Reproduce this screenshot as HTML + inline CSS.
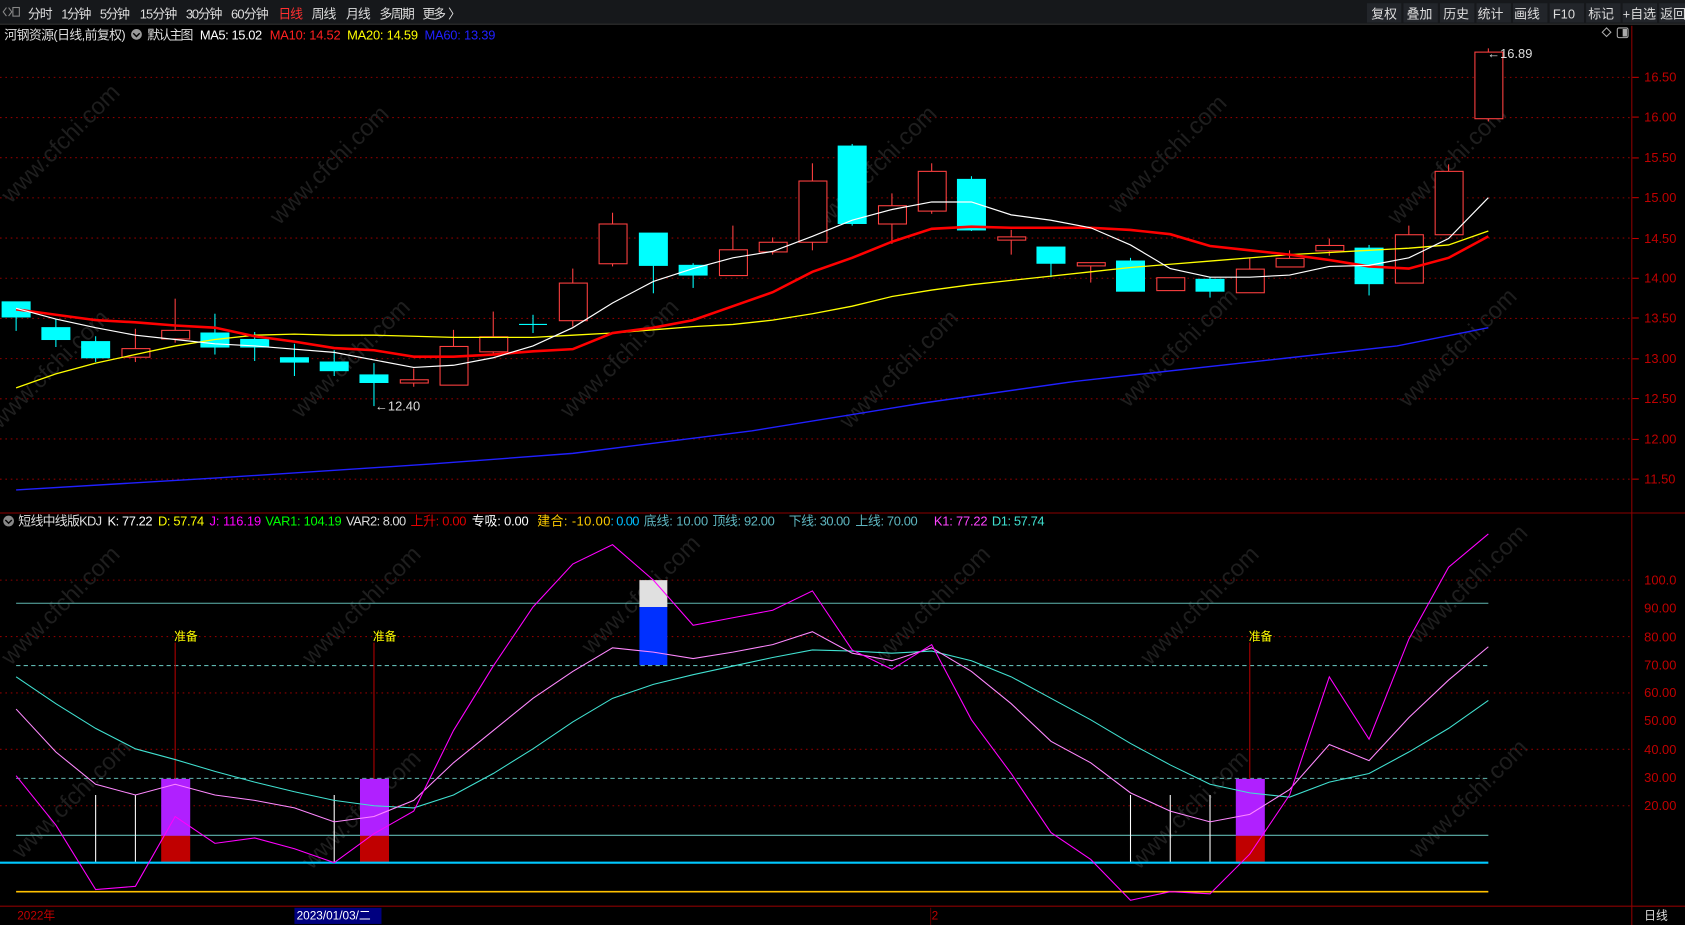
<!DOCTYPE html>
<html><head><meta charset="utf-8"><style>
html,body{margin:0;padding:0;background:#000;width:1685px;height:925px;overflow:hidden}
svg{display:block}
text{font-family:"Liberation Sans","Noto Sans CJK SC",sans-serif}
</style></head><body>
<svg width="1685" height="925" viewBox="0 0 1568 861" preserveAspectRatio="none" xmlns="http://www.w3.org/2000/svg">
<rect width="1568" height="861" fill="#000"/>
<!-- top bar -->
<rect x="0" y="0" width="1568" height="22" fill="#16181b"/>
<line x1="0" y1="22.5" x2="1568" y2="22.5" stroke="#333"/>
<g font-size="12" fill="#ddd" lengthAdjust="spacingAndGlyphs">
<path d="M6 7 L3 11 L6 15 M8 7 L11 11 L8 15" stroke="#888" fill="none"/><rect x="12" y="7" width="6" height="8" fill="none" stroke="#888"/>
<text x="26" y="17" textLength="23">分时</text><text x="57" y="17" textLength="28">1分钟</text><text x="93" y="17" textLength="28">5分钟</text><text x="130" y="17" textLength="35">15分钟</text><text x="173" y="17" textLength="34">30分钟</text><text x="215" y="17" textLength="35">60分钟</text>
<text x="259" y="17" fill="#ff3030" textLength="23">日线</text><text x="290" y="17" textLength="23">周线</text><text x="322" y="17" textLength="23">月线</text><text x="353" y="17" textLength="33">多周期</text><text x="393" y="17" textLength="22">更多</text><text x="417" y="17">〉</text>
</g>
<g font-size="12" fill="#ddd">
<rect x="1272" y="3" width="32" height="18" fill="#22252a"/><text x="1276" y="17">复权</text>
<rect x="1306" y="3" width="32" height="18" fill="#22252a"/><text x="1309" y="17">叠加</text>
<rect x="1340" y="3" width="32" height="18" fill="#22252a"/><text x="1343" y="17">历史</text>
<rect x="1374" y="3" width="32" height="18" fill="#22252a"/><text x="1375" y="17">统计</text>
<rect x="1408" y="3" width="32" height="18" fill="#22252a"/><text x="1409" y="17">画线</text>
<rect x="1442" y="3" width="32" height="18" fill="#22252a"/><text x="1445" y="17">F10</text>
<rect x="1476" y="3" width="32" height="18" fill="#22252a"/><text x="1478" y="17">标记</text>
<rect x="1510" y="3" width="32" height="18" fill="#22252a"/><text x="1510" y="17">+自选</text>
<rect x="1544" y="3" width="24" height="18" fill="#22252a"/><text x="1545" y="17">返回</text>
</g>
<!-- info line -->
<g font-size="12" lengthAdjust="spacingAndGlyphs">
<text x="4" y="37" fill="#ddd" textLength="113">河钢资源(日线,前复权)</text>
<circle cx="127" cy="32" r="5" fill="#999"/><path d="M124 31 L127 34 L130 31" stroke="#000" fill="none" stroke-width="1.3"/>
<text x="137" y="37" fill="#ddd" textLength="43">默认主图</text>
<text x="186" y="37" fill="#fff" textLength="58">MA5: 15.02</text>
<text x="251" y="37" fill="#ff2020" textLength="66">MA10: 14.52</text>
<text x="323" y="37" fill="#ffff00" textLength="66">MA20: 14.59</text>
<text x="395" y="37" fill="#2020ff" textLength="66">MA60: 13.39</text>
</g>
<path d="M1491 30 L1495 26 L1499 30 L1495 34Z" fill="none" stroke="#aaa"/>
<rect x="1505" y="26" width="10" height="9" fill="none" stroke="#aaa" rx="1.5"/><rect x="1510" y="27" width="4" height="7" fill="#aaa"/>
<!-- axis frame -->
<line x1="1518.5" y1="24" x2="1518.5" y2="861" stroke="#8b0000"/>
<line x1="0" y1="477.5" x2="1568" y2="477.5" stroke="#8b0000"/>
<line x1="0" y1="843.5" x2="1568" y2="843.5" stroke="#8b0000"/>
<!-- price grid -->
<g stroke="#8b0000" stroke-dasharray="1.5 3.5">
<line x1="0" y1="72" x2="1518" y2="72"/><line x1="0" y1="109.4" x2="1518" y2="109.4"/><line x1="0" y1="146.8" x2="1518" y2="146.8"/><line x1="0" y1="184.2" x2="1518" y2="184.2"/><line x1="0" y1="221.6" x2="1518" y2="221.6"/><line x1="0" y1="259" x2="1518" y2="259"/><line x1="0" y1="296.4" x2="1518" y2="296.4"/><line x1="0" y1="333.8" x2="1518" y2="333.8"/><line x1="0" y1="371.2" x2="1518" y2="371.2"/><line x1="0" y1="408.6" x2="1518" y2="408.6"/><line x1="0" y1="446" x2="1518" y2="446"/>
</g>
<g font-size="12" fill="#c00000">
<text x="1530" y="76">16.50</text><text x="1530" y="113">16.00</text><text x="1530" y="151">15.50</text><text x="1530" y="188">15.00</text><text x="1530" y="226">14.50</text><text x="1530" y="263">14.00</text><text x="1530" y="300">13.50</text><text x="1530" y="338">13.00</text><text x="1530" y="375">12.50</text><text x="1530" y="413">12.00</text><text x="1530" y="450">11.50</text>
</g>
<g stroke="#c00000"><line x1="1519" y1="72" x2="1525" y2="72"/><line x1="1519" y1="109" x2="1525" y2="109"/><line x1="1519" y1="147" x2="1525" y2="147"/><line x1="1519" y1="184" x2="1525" y2="184"/><line x1="1519" y1="222" x2="1525" y2="222"/><line x1="1519" y1="259" x2="1525" y2="259"/><line x1="1519" y1="296" x2="1525" y2="296"/><line x1="1519" y1="334" x2="1525" y2="334"/><line x1="1519" y1="371" x2="1525" y2="371"/><line x1="1519" y1="409" x2="1525" y2="409"/><line x1="1519" y1="446" x2="1525" y2="446"/></g>
<!-- watermarks -->
<g font-size="22" fill="#1e1e1e">
<text transform="translate(10,190) rotate(-45)">www.cfchi.com</text>
<text transform="translate(260,210) rotate(-45)">www.cfchi.com</text>
<text transform="translate(530,390) rotate(-45)">www.cfchi.com</text>
<text transform="translate(770,210) rotate(-45)">www.cfchi.com</text>
<text transform="translate(1040,200) rotate(-45)">www.cfchi.com</text>
<text transform="translate(1300,210) rotate(-45)">www.cfchi.com</text>
<text transform="translate(0,400) rotate(-45)">www.cfchi.com</text>
<text transform="translate(280,390) rotate(-45)">www.cfchi.com</text>
<text transform="translate(790,400) rotate(-45)">www.cfchi.com</text>
<text transform="translate(1050,380) rotate(-45)">www.cfchi.com</text>
<text transform="translate(1310,380) rotate(-45)">www.cfchi.com</text>
<text transform="translate(10,620) rotate(-45)">www.cfchi.com</text>
<text transform="translate(290,620) rotate(-45)">www.cfchi.com</text>
<text transform="translate(550,610) rotate(-45)">www.cfchi.com</text>
<text transform="translate(820,620) rotate(-45)">www.cfchi.com</text>
<text transform="translate(1070,620) rotate(-45)">www.cfchi.com</text>
<text transform="translate(1320,600) rotate(-45)">www.cfchi.com</text>
<text transform="translate(20,800) rotate(-45)">www.cfchi.com</text>
<text transform="translate(290,810) rotate(-45)">www.cfchi.com</text>
<text transform="translate(1060,810) rotate(-45)">www.cfchi.com</text>
<text transform="translate(1320,800) rotate(-45)">www.cfchi.com</text>
</g>
<!-- candles -->
<g stroke-width="1">
<g fill="#00ffff" stroke="#00ffff">
<line x1="15" y1="281" x2="15" y2="308"/><rect x="2" y="281" width="26" height="14"/>
<line x1="52" y1="297" x2="52" y2="323"/><rect x="39" y="305" width="26" height="11"/>
<line x1="89" y1="313" x2="89" y2="337"/><rect x="76" y="318" width="26" height="15"/>
<line x1="200" y1="292" x2="200" y2="330"/><rect x="187" y="310" width="26" height="13"/>
<line x1="237" y1="309" x2="237" y2="336"/><rect x="224" y="316" width="26" height="7"/>
<line x1="274" y1="320" x2="274" y2="350"/><rect x="261" y="333" width="26" height="4"/>
<line x1="311" y1="326" x2="311" y2="350"/><rect x="298" y="337" width="26" height="8"/>
<line x1="348" y1="338" x2="348" y2="378"/><rect x="335" y="349" width="26" height="7"/>
<line x1="496" y1="293" x2="496" y2="310"/><line x1="483" y1="302" x2="509" y2="302"/>
<line x1="608" y1="217" x2="608" y2="273"/><rect x="595" y="217" width="26" height="30"/>
<line x1="645" y1="245" x2="645" y2="268"/><rect x="632" y="247" width="26" height="9"/>
<line x1="793" y1="134" x2="793" y2="210"/><rect x="780" y="136" width="26" height="72"/>
<line x1="904" y1="164" x2="904" y2="215"/><rect x="891" y="167" width="26" height="47"/>
<line x1="978" y1="230" x2="978" y2="258"/><rect x="965" y="230" width="26" height="15"/>
<line x1="1052" y1="240" x2="1052" y2="271"/><rect x="1039" y="243" width="26" height="28"/>
<line x1="1126" y1="258" x2="1126" y2="277"/><rect x="1113" y="260" width="26" height="11"/>
<line x1="1274" y1="228" x2="1274" y2="275"/><rect x="1261" y="231" width="26" height="33"/>
</g>
<g fill="#000" stroke="#ff4040">
<line x1="126" y1="306" x2="126" y2="337"/><rect x="113.5" y="324.5" width="26" height="8"/>
<line x1="163" y1="278" x2="163" y2="319"/><rect x="150.5" y="307.5" width="26" height="8"/>
<line x1="385" y1="343" x2="385" y2="360"/><rect x="372.5" y="353.5" width="26" height="3"/>
<line x1="422" y1="307" x2="422" y2="358"/><rect x="409.5" y="322.5" width="26" height="36"/>
<line x1="459" y1="290" x2="459" y2="330"/><rect x="446.5" y="313.5" width="26" height="14"/>
<line x1="533" y1="250" x2="533" y2="304"/><rect x="520.5" y="263.5" width="26" height="35"/>
<line x1="570" y1="198" x2="570" y2="248"/><rect x="557.5" y="208.5" width="26" height="37"/>
<line x1="682" y1="210" x2="682" y2="256"/><rect x="669.5" y="232.5" width="26" height="24"/>
<line x1="719" y1="221" x2="719" y2="237"/><rect x="706.5" y="225.5" width="26" height="9"/>
<line x1="756" y1="152" x2="756" y2="233"/><rect x="743.5" y="168.5" width="26" height="57"/>
<line x1="830" y1="180" x2="830" y2="227"/><rect x="817.5" y="191.5" width="26" height="17"/>
<line x1="867" y1="152" x2="867" y2="199"/><rect x="854.5" y="159.5" width="26" height="37"/>
<line x1="941" y1="214" x2="941" y2="237"/><rect x="928.5" y="220.5" width="26" height="3"/>
<line x1="1015" y1="244" x2="1015" y2="263"/><rect x="1002.5" y="244.5" width="26" height="3"/>
<rect x="1076.5" y="258.5" width="26" height="12"/>
<line x1="1163" y1="240" x2="1163" y2="272"/><rect x="1150.5" y="250.5" width="26" height="22"/>
<line x1="1200" y1="233" x2="1200" y2="248"/><rect x="1187.5" y="240.5" width="26" height="8"/>
<line x1="1237" y1="222" x2="1237" y2="238"/><rect x="1224.5" y="228.5" width="26" height="5"/>
<line x1="1311" y1="210" x2="1311" y2="263"/><rect x="1298.5" y="218.5" width="26" height="45"/>
<line x1="1348" y1="153" x2="1348" y2="218"/><rect x="1335.5" y="159.5" width="26" height="59"/>
<line x1="1385" y1="45" x2="1385" y2="113"/><rect x="1372.5" y="48.5" width="26" height="62"/>
</g>
</g>
<!-- MA lines -->
<polyline fill="none" stroke="#2020ff" stroke-width="1.3" points="15,456 200,445 400,432 533,422 700,401 860,375 1000,355 1200,333 1300,322 1385,305"/>
<polyline fill="none" stroke="#ffff00" stroke-width="1.2" points="15,361 52,348 89,338 126,330 163,322 200,316 237,312 274,311 311,312 348,312 385,313 422,314 459,314 496,314 533,312 570,310 608,307 645,304 682,302 719,298 756,292 793,285 830,276 867,270 904,265 941,261 978,257 1015,253 1052,249 1089,246 1126,243 1163,240 1200,237 1237,235 1274,233 1311,231 1348,228 1385,215"/>
<polyline fill="none" stroke="#ff0000" stroke-width="2.4" points="15,288 52,293 89,298 126,300 163,303 200,305 237,313 274,318 311,324 348,326 385,332 422,332 459,330 496,327 533,325 570,310 608,305 645,298 682,285 719,272 756,253 793,240 830,225 867,213 904,211 941,212 978,212 1015,212 1052,214 1089,218 1126,229 1163,233 1200,237 1237,242 1274,248 1311,250 1348,240 1385,220"/>
<polyline fill="none" stroke="#ffffff" stroke-width="1.1" points="15,287 52,297 89,305 126,312 163,316 200,320 237,322 274,325 311,328 348,335 385,342 422,340 459,333 496,322 533,305 570,282 608,262 645,250 682,240 719,234 756,220 793,205 830,195 867,188 904,188 941,200 978,205 1015,212 1052,228 1089,250 1126,258 1163,258 1200,256 1237,248 1274,247 1311,240 1348,222 1385,184"/>
<g font-size="12" fill="#ddd"><text x="349" y="382">←12.40</text><text x="1384" y="54">←16.89</text></g>
<!-- indicator header -->
<g font-size="12" lengthAdjust="spacingAndGlyphs">
<circle cx="8" cy="485" r="5" fill="#888"/><path d="M5 484 L8 487 L11 484" stroke="#000" fill="none" stroke-width="1.3"/>
<text x="17" y="489" fill="#ddd" textLength="78">短线中线版KDJ</text>
<text x="100" y="489" fill="#fff" textLength="42">K: 77.22</text>
<text x="147" y="489" fill="#ffff00" textLength="43">D: 57.74</text>
<text x="195" y="489" fill="#ff00ff" textLength="48">J: 116.19</text>
<text x="247" y="489" fill="#00ff00" textLength="71">VAR1: 104.19</text>
<text x="322" y="489" fill="#ddd" textLength="56">VAR2: 8.00</text>
<text x="382" y="489" fill="#e00000" textLength="52">上升: 0.00</text>
<text x="439" y="489" fill="#fff" textLength="53">专吸: 0.00</text>
<text x="500" y="489" fill="#ffcc00" textLength="68">建合: -10.00</text>
<text x="568" y="489" fill="#00bfff" textLength="27">: 0.00</text>
<text x="599" y="489" fill="#5fb6c0" textLength="60">底线: 10.00</text>
<text x="663" y="489" fill="#5fb6c0" textLength="58">顶线: 92.00</text>
<text x="734" y="489" fill="#5fb6c0" textLength="57">下线: 30.00</text>
<text x="796" y="489" fill="#5fb6c0" textLength="58">上线: 70.00</text>
<text x="869" y="489" fill="#ff44ff" textLength="50">K1: 77.22</text>
<text x="923" y="489" fill="#40e0d0" textLength="49">D1: 57.74</text>
</g>
<!-- indicator grid -->
<g stroke="#8b0000" stroke-dasharray="1.5 3.5">
<line x1="0" y1="540" x2="1518" y2="540"/><line x1="0" y1="592.5" x2="1518" y2="592.5"/><line x1="0" y1="645" x2="1518" y2="645"/><line x1="0" y1="697.5" x2="1518" y2="697.5"/><line x1="0" y1="750" x2="1518" y2="750"/>
</g>
<g font-size="12" fill="#c00000">
<text x="1530" y="544">100.0</text><text x="1530" y="570">90.00</text><text x="1530" y="597">80.00</text><text x="1530" y="623">70.00</text><text x="1530" y="649">60.00</text><text x="1530" y="675">50.00</text><text x="1530" y="702">40.00</text><text x="1530" y="728">30.00</text><text x="1530" y="754">20.00</text>
</g>
<line x1="15" y1="561.5" x2="1385" y2="561.5" stroke="#5fb6b0"/>
<line x1="15" y1="619.5" x2="1385" y2="619.5" stroke="#5fb6b0" stroke-dasharray="4 3"/>
<line x1="15" y1="724.5" x2="1385" y2="724.5" stroke="#5fb6b0" stroke-dasharray="4 3"/>
<line x1="15" y1="777.5" x2="1385" y2="777.5" stroke="#5fb6b0"/>
<line x1="15" y1="830" x2="1385" y2="830" stroke="#ffc000" stroke-width="1.5"/>
<!-- white bars -->
<g stroke="#fff"><line x1="89" y1="740" x2="89" y2="803"/><line x1="126" y1="740" x2="126" y2="803"/><line x1="311" y1="740" x2="311" y2="803"/><line x1="1052" y1="740" x2="1052" y2="803"/><line x1="1089" y1="740" x2="1089" y2="803"/><line x1="1126" y1="740" x2="1126" y2="803"/></g>
<!-- signal bars -->
<g stroke="#b00000"><line x1="163" y1="598" x2="163" y2="725"/><line x1="348" y1="598" x2="348" y2="725"/><line x1="1163" y1="598" x2="1163" y2="725"/></g>
<g font-size="11" fill="#ffff00"><text x="162" y="596">准备</text><text x="347" y="596">准备</text><text x="1162" y="596">准备</text></g>
<rect x="150" y="725" width="27" height="53" fill="#b020ff"/><rect x="150" y="778" width="27" height="25" fill="#c00000"/>
<rect x="335" y="725" width="27" height="53" fill="#b020ff"/><rect x="335" y="778" width="27" height="25" fill="#c00000"/>
<rect x="1150" y="725" width="27" height="53" fill="#b020ff"/><rect x="1150" y="778" width="27" height="25" fill="#c00000"/>
<rect x="595" y="540" width="26" height="25" fill="#e0e0e0"/><rect x="595" y="565" width="26" height="54" fill="#0030ff"/>
<line x1="0" y1="803" x2="1385" y2="803" stroke="#00c8ff" stroke-width="2"/>
<!-- KDJ lines -->
<polyline fill="none" stroke="#40e0d0" stroke-width="1" points="15,630 52,655 89,678 126,697 163,707 200,718 237,728 274,737 311,745 348,750 385,752 422,740 459,720 496,697 533,672 570,650 608,637 645,628 682,620 719,612 756,605 793,606 830,608 867,606 904,615 941,630 978,650 1015,670 1052,692 1089,712 1126,730 1163,738 1200,742 1237,728 1274,720 1311,700 1348,678 1385,652"/>
<polyline fill="none" stroke="#ff88ff" stroke-width="1" points="15,660 52,700 89,730 126,740 163,730 200,740 237,745 274,752 311,765 348,760 385,745 422,710 459,680 496,650 533,625 570,603 608,607 645,613 682,607 719,600 756,588 793,608 830,615 867,603 904,625 941,655 978,690 1015,710 1052,738 1089,755 1126,765 1163,758 1200,735 1237,693 1274,708 1311,668 1348,633 1385,602"/>
<polyline fill="none" stroke="#ff00ff" stroke-width="1" points="15,722 52,768 89,828 126,825 163,760 200,785 237,780 274,790 311,803 348,776 385,755 422,680 459,620 496,565 533,525 570,507 608,540 645,582 682,575 719,568 756,550 793,605 830,623 867,600 904,670 941,720 978,775 1015,800 1052,838 1089,830 1126,832 1163,795 1200,740 1237,630 1274,688 1311,595 1348,528 1385,497"/>
<!-- bottom axis -->
<g font-size="11">
<text x="16" y="856" fill="#c00000">2022年</text>
<rect x="274" y="845" width="81" height="15" fill="#000080"/>
<text x="276" y="856" fill="#fff">2023/01/03/二</text>
<line x1="866" y1="845" x2="866" y2="861" stroke="#5a0000"/>
<text x="867" y="856" fill="#c00000">2</text>
<text x="1530" y="856" fill="#ddd">日线</text>
</g>
</svg>
</body></html>
